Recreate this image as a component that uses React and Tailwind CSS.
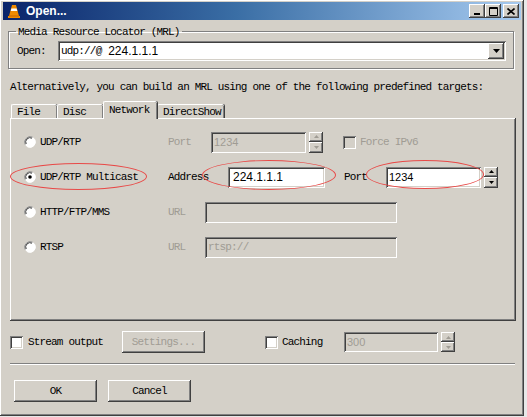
import React from 'react';

const mono = { fontFamily: '"Liberation Mono", "Courier New", monospace' };
const sans = { fontFamily: '"Liberation Sans", Arial, sans-serif' };

// classic win2k bevels
const RAISED = 'shadow-[inset_-1px_-1px_0_#404040,inset_1px_1px_0_#ffffff,inset_-2px_-2px_0_#808080,inset_2px_2px_0_#d4d0c8]';
const SUNKEN = 'shadow-[inset_1px_1px_0_#808080,inset_-1px_-1px_0_#ffffff,inset_2px_2px_0_#404040,inset_-2px_-2px_0_#d4d0c8]';

function Txt({ children, className = '' }) {
  return (
    <span className={`text-[11px] leading-[12px] tracking-[-0.83px] whitespace-pre ${className}`} style={mono}>
      {children}
    </span>
  );
}

function Radio({ checked }) {
  return (
    <svg width="12" height="12" viewBox="0 0 12 12" className="shrink-0">
      <circle cx="6" cy="6" r="5.5" fill="#ffffff" />
      <path d="M1.2 8.5 A5.5 5.5 0 0 1 8.5 1.2" stroke="#808080" strokeWidth="1" fill="none" />
      <path d="M2.2 8 A4.3 4.3 0 0 1 8 2.2" stroke="#404040" strokeWidth="1" fill="none" />
      <path d="M10.8 3.5 A5.5 5.5 0 0 1 3.5 10.8" stroke="#ffffff" strokeWidth="1" fill="none" />
      {checked && <circle cx="6" cy="6" r="1.8" fill="#000000" />}
    </svg>
  );
}

function Check({ disabled }) {
  return (
    <div className={`w-[13px] h-[13px] shrink-0 ${SUNKEN} ${disabled ? 'bg-[#d4d0c8]' : 'bg-white'}`} />
  );
}

function Spin({ disabled, h = 'h-[21px]' }) {
  const c = disabled ? '#a09c94' : '#000000';
  return (
    <div className={`flex flex-col w-[14px] ${h} shrink-0`}>
      <div className={`flex-1 bg-[#d4d0c8] ${RAISED} flex items-center justify-center`}>
        <svg width="5" height="3" viewBox="0 0 5 3"><path d="M2.5 0 L5 3 H0 Z" fill={c} /></svg>
      </div>
      <div className={`flex-1 bg-[#d4d0c8] ${RAISED} flex items-center justify-center`}>
        <svg width="5" height="3" viewBox="0 0 5 3"><path d="M0 0 H5 L2.5 3 Z" fill={c} /></svg>
      </div>
    </div>
  );
}

function Field({ w, children, disabled, h = 'h-[21px]' }) {
  return (
    <div className={`${w} ${h} shrink-0 ${SUNKEN} ${disabled ? 'bg-[#d4d0c8]' : 'bg-white'} flex items-center pl-[3px]`}>
      {children}
    </div>
  );
}

function Button({ w, children, disabled }) {
  return (
    <div className={`${w} h-[22px] bg-[#d4d0c8] ${RAISED} flex items-center justify-center shrink-0`}>
      <Txt className={disabled ? 'text-[#a09c94]' : 'text-black'}>{children}</Txt>
    </div>
  );
}

function Tab({ w, h, label, active }) {
  return (
    <div
      className={`${w} ${h} rounded-t-[2px] border-t border-l border-white shadow-[inset_-1px_0_0_#808080,1px_0_0_#404040] flex items-center pl-[5px] ${active ? 'bg-[#d4d0c8] pb-[2px] relative z-10 -mb-[1px] h-[18px]' : 'bg-[#d4d0c8]'}`}
    >
      <Txt className="text-black">{label}</Txt>
    </div>
  );
}

function WinBtn({ children }) {
  return (
    <div className={`w-[16px] h-[14px] bg-[#d4d0c8] ${RAISED} flex items-center justify-center`}>
      {children}
    </div>
  );
}

function VlcIcon() {
  return (
    <svg width="14" height="15" viewBox="0 0 14 15">
      <path d="M5 1 H9 L12 12 H2 Z" fill="#f08a00" />
      <path d="M4.4 4.5 H9.6 L10.3 7 H3.7 Z" fill="#ffffff" />
      <path d="M1 12 H13 V14 H1 Z" fill="#f08a00" />
      <path d="M2 12 H12" stroke="#c86400" strokeWidth="1" />
    </svg>
  );
}

export default function App() {
  const gray = 'text-[#a09c94]';
  return (
    <div className="relative w-[527px] h-[417px] bg-[#e8e8e8] overflow-hidden">
      <div className={`w-[524px] h-[416px] bg-[#d4d0c8] ${RAISED} pt-[2px]`}>
        {/* title bar */}
        <div className="mx-[3px] h-[18px] bg-[linear-gradient(90deg,#0a246a_0%,#3a6ea5_45%,#a6caf0_100%)] flex items-center pl-[4px] pr-[2px]">
          <VlcIcon />
          <span className="ml-[5px] text-white font-bold text-[12px] leading-[14px]" style={sans}>Open...</span>
          <div className="ml-auto flex items-center">
            <WinBtn>
              <svg width="8" height="8" viewBox="0 0 8 8"><path d="M1 6 H7 V8 H1 Z" fill="#000" /></svg>
            </WinBtn>
            <WinBtn>
              <svg width="9" height="9" viewBox="0 0 9 9"><path d="M0.5 0.5 H8.5 V8.5 H0.5 Z M0.5 1.5 H8.5" stroke="#000" fill="none" /></svg>
            </WinBtn>
            <div className="w-[2px]" />
            <WinBtn>
              <svg width="8" height="7" viewBox="0 0 8 7"><path d="M0.5 0.5 L7.5 6.5 M7.5 0.5 L0.5 6.5" stroke="#000" strokeWidth="1.6" /></svg>
            </WinBtn>
          </div>
        </div>

        {/* MRL group */}
        <fieldset className="ml-[8px] mt-[5px] w-[506px] border border-[#808080] shadow-[inset_1px_1px_0_#ffffff,1px_1px_0_#ffffff] pl-[8px] pr-[7px] pb-[7px]">
          <legend className="px-[2px] -ml-[1px] text-[11px] leading-[12px] h-[12px]">
            <Txt className="text-black">Media Resource Locator (MRL)</Txt>
          </legend>
          <div className="flex items-center mt-[4px]">
            <Txt className="text-black w-[41px]">Open:</Txt>
            <div className={`flex-1 h-[20px] bg-white ${SUNKEN} flex items-center pl-[3px] pr-[2px]`}>
              <Txt className="text-black">udp://@ </Txt>
              <span className="text-[12px] leading-[14px] text-black ml-[1px]" style={sans}>224.1.1.1</span>
              <div className={`ml-auto w-[16px] h-[16px] bg-[#d4d0c8] ${RAISED} flex items-center justify-center`}>
                <svg width="7" height="4" viewBox="0 0 7 4"><path d="M0 0 H7 L3.5 4 Z" fill="#000" /></svg>
              </div>
            </div>
          </div>
        </fieldset>

        <div className="ml-[10px] mt-[11px] h-[12px] leading-[12px] text-[11px]">
          <Txt className="text-black">Alternatively, you can build an MRL using one of the following predefined targets:</Txt>
        </div>

        {/* tabs */}
        <div className="ml-[11px] mt-[9px] flex items-end h-[17px]">
          <Tab w="w-[46px]" h="h-[14px]" label="File" />
          <Tab w="w-[46px]" h="h-[14px]" label="Disc" />
          <Tab w="w-[54px]" h="h-[17px]" label="Network" active />
          <Tab w="w-[67px]" h="h-[14px]" label="DirectShow" />
        </div>

        {/* network panel */}
        <div className="ml-[10px] w-[506px] h-[203px] bg-[#d4d0c8] shadow-[inset_-1px_-1px_0_#404040,inset_1px_1px_0_#ffffff,inset_-2px_-2px_0_#808080] pl-[14px] pt-[13px] flex flex-col gap-[13px]">
          <div className="flex items-center h-[22px]">
            <div className="w-[16px]"><Radio /></div>
            <Txt className="text-black w-[128px]">UDP/RTP</Txt>
            <Txt className={`${gray} w-[43px]`}>Port</Txt>
            <Field w="w-[95px]" disabled>
              <span className={`text-[11px] ${gray}`} style={sans}>1234</span>
            </Field>
            <div className="w-[3px]" />
            <Spin disabled />
            <div className="w-[20px]" />
            <Check disabled />
            <div className="w-[4px]" />
            <Txt className={gray}>Force IPv6</Txt>
          </div>

          <div className="flex items-center h-[22px]">
            <div className="w-[16px]"><Radio checked /></div>
            <Txt className="text-black w-[128px]">UDP/RTP Multicast</Txt>
            <Txt className="text-black w-[60px]">Address</Txt>
            <Field w="w-[97px]">
              <span className="text-[12px] text-black ml-[2px]" style={sans}>224.1.1.1</span>
            </Field>
            <div className="w-[19px]" />
            <Txt className="text-black w-[42px]">Port</Txt>
            <Field w="w-[95px]">
              <span className="text-[11px] text-black" style={sans}>1234</span>
            </Field>
            <div className="w-[3px]" />
            <Spin />
          </div>

          <div className="flex items-center h-[22px]">
            <div className="w-[16px]"><Radio /></div>
            <Txt className="text-black w-[128px]">HTTP/FTP/MMS</Txt>
            <Txt className={`${gray} w-[37px]`}>URL</Txt>
            <Field w="w-[192px]" disabled />
          </div>

          <div className="flex items-center h-[22px]">
            <div className="w-[16px]"><Radio /></div>
            <Txt className="text-black w-[128px]">RTSP</Txt>
            <Txt className={`${gray} w-[37px]`}>URL</Txt>
            <Field w="w-[192px]" disabled>
              <Txt className={gray}>rtsp://</Txt>
            </Field>
          </div>
        </div>

        {/* stream output / caching */}
        <div className="ml-[10px] mt-[10px] flex items-center h-[22px]">
          <Check />
          <div className="w-[5px]" />
          <Txt className="text-black w-[94px]">Stream output</Txt>
          <Button w="w-[83px]" disabled>Settings...</Button>
          <div className="w-[60px]" />
          <Check />
          <div className="w-[4px]" />
          <Txt className="text-black w-[62px]">Caching</Txt>
          <Field w="w-[94px]" h="h-[20px]" disabled>
            <span className={`text-[11px] ${gray}`} style={sans}>300</span>
          </Field>
          <div className="w-[3px]" />
          <Spin disabled h="h-[20px]" />
        </div>

        <div className="ml-[10px] mt-[10px] w-[505px] h-[2px] border-t border-[#808080] border-b border-b-white" />

        <div className="ml-[14px] mt-[15px] flex gap-[11px]">
          <Button w="w-[83px]">OK</Button>
          <Button w="w-[83px]">Cancel</Button>
        </div>
      </div>

      {/* red annotation ellipses */}
      <div className="absolute left-[10px] top-[163px] w-[137px] h-[27px] rounded-[50%] border border-[#e84a48] pointer-events-none" />
      <div className="absolute left-[202px] top-[160px] w-[134px] h-[30px] rounded-[50%] border border-[#e84a48] pointer-events-none" />
      <div className="absolute left-[366px] top-[160px] w-[118px] h-[29px] rounded-[50%] border border-[#e84a48] pointer-events-none" />
    </div>
  );
}
